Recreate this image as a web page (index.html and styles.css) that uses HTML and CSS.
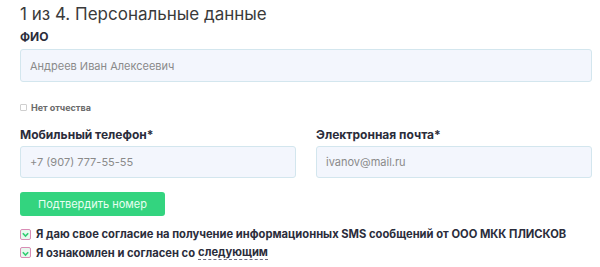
FILE: index.html
```html
<!DOCTYPE html>
<html lang="ru">
<head>
    <meta charset="UTF-8">
    <title>Персональные данные</title>
    <link rel="stylesheet" href="styles.css">
</head>
<body>
    <div class="form">
        <h2 class="step-title">1 из 4. Персональные данные</h2>

        <!-- ФИО -->
        <label class="field-label fio-label">ФИО</label>
        <input class="field" type="text" placeholder="Андреев Иван Алексеевич">

        <label class="small-check">
            <span class="small-box"></span>
            <span>Нет отчества</span>
        </label>

        <!-- Contacts -->
        <div class="row">
            <div class="col">
                <label class="field-label">Мобильный телефон*</label>
                <input class="field" type="text" placeholder="+7 (907) 777-55-55">
            </div>
            <div class="col">
                <label class="field-label">Электронная почта*</label>
                <input class="field" type="text" placeholder="ivanov@mail.ru">
            </div>
        </div>

        <button class="confirm-btn">Подтвердить номер</button>

        <!-- Agreements -->
        <div class="agree">
            <span class="agree-box">
                <svg viewBox="0 0 10 10" width="10" height="10"><path d="M2 4.2 L5 7.2 L8 4.2" fill="none" stroke="#2ecc71" stroke-width="1.8"/></svg>
            </span>
            <span>Я даю свое согласие на получение информационных SMS сообщений от ООО МКК ПЛИСКОВ</span>
        </div>
        <div class="agree">
            <span class="agree-box">
                <svg viewBox="0 0 10 10" width="10" height="10"><path d="M2 4.2 L5 7.2 L8 4.2" fill="none" stroke="#2ecc71" stroke-width="1.8"/></svg>
            </span>
            <span>Я ознакомлен и согласен со</span>
            <span class="dotted">следующим</span>
        </div>
    </div>
</body>
</html>
```

FILE: styles.css
```css
* {
    box-sizing: border-box;
    margin: 0;
    padding: 0;
}

body {
    font-family: 'Inter', sans-serif;
    color: #2b2d3b;
    background: #ffffff;
}

.form {
    padding: 4px 8px 0 20px;
}

.step-title {
    font-size: 17px;
    font-weight: normal;
    color: #3a3a3a;
    line-height: 20px;
}

.field-label {
    display: block;
    font-size: 12px;
    font-weight: bold;
    line-height: 16px;
    margin-top: 3px;
    margin-bottom: 5px;
}

.fio-label {
    margin-top: 5px;
    margin-bottom: 4px;
}

.field {
    display: block;
    width: 100%;
    height: 33px;
    padding: 0 9px;
    background: #f3f6fd;
    border: 1px solid #d3e6ee;
    border-radius: 3px;
    font-family: inherit;
    font-size: 11px;
    outline: none;
}

.field::placeholder {
    color: #8a8a8a;
}

.small-check {
    display: flex;
    align-items: center;
    gap: 4px;
    margin-top: 20px;
    font-size: 9px;
    font-weight: bold;
    color: #6a6a6a;
}

.small-box {
    width: 7px;
    height: 7px;
    border: 1px solid #cfcfcf;
    border-radius: 1px;
}

.row {
    display: flex;
    gap: 20px;
    margin-top: 11px;
}

.col {
    flex: 1;
}

.row .field-label {
    margin-bottom: 3px;
}

.row .field {
    height: 32px;
}

.confirm-btn {
    display: block;
    width: 145px;
    height: 24px;
    margin-top: 14px;
    background: #33d47f;
    border: none;
    border-radius: 3px;
    color: #e9fff2;
    font-family: inherit;
    font-size: 11px;
}

.agree {
    display: flex;
    align-items: center;
    gap: 5px;
    margin-top: 11px;
    font-size: 11.2px;
    font-weight: bold;
    line-height: 14px;
    white-space: nowrap;
}

.agree + .agree {
    margin-top: 4px;
}

.agree-box {
    display: flex;
    align-items: center;
    justify-content: center;
    width: 11px;
    height: 11px;
    border: 1px solid #d98cb5;
    border-radius: 2px;
    background: #e8f8ee;
}

.dotted {
    align-self: flex-start;
    margin-left: -2px;
    border-bottom: 1px dashed #6b6b80;
}
```
